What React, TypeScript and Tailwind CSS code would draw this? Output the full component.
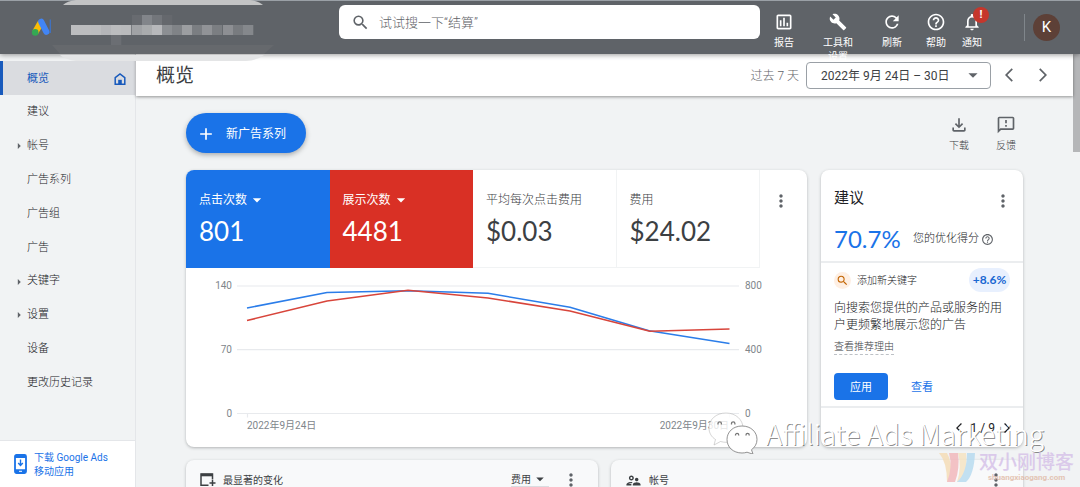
import React from "react";
import {
  MdAdd,
  MdArrowBackIosNew,
  MdArrowDropDown,
  MdArrowForwardIos,
  MdArrowRight,
  MdBuild,
  MdHelpOutline,
  MdMoreVert,
  MdNotificationsNone,
  MdOutlineAssessment,
  MdOutlineFeedback,
  MdOutlineFileDownload,
  MdOutlineSupervisorAccount,
  MdRefresh,
  MdSearch,
} from "react-icons/md";

const navItems = [
  { label: "概览", active: true },
  { label: "建议" },
  { label: "帐号", expandable: true },
  { label: "广告系列" },
  { label: "广告组" },
  { label: "广告" },
  { label: "关键字", expandable: true },
  { label: "设置", expandable: true },
  { label: "设备" },
  { label: "更改历史记录" },
];

const metrics = [
  { label: "点击次数", value: "801", menu: true, tone: "bg-[#1a73e8] text-white font-normal" },
  { label: "展示次数", value: "4481", menu: true, tone: "bg-[#d93025] text-white font-normal" },
  { label: "平均每次点击费用", value: "$0.03", tone: "border-r border-b border-[#f1f3f4] text-[#3c4043]" },
  { label: "费用", value: "$24.02", tone: "border-r border-b border-[#f1f3f4] text-[#3c4043]" },
];

const maskTiles = [
  [80, 15, "#686b70"], [90, 15, "#82858a"], [100, 15, "#73767b"], [110, 15, "#65686d"],
  [19, 25, "#bcbdbf"], [29, 25, "#bcbdbf"], [39, 25, "#bbbcbe"], [49, 25, "#b4b5b8"],
  [59, 25, "#bbbcbe"], [69, 25, "#b9babc"], [80, 25, "#a0a2a5"], [90, 25, "#a9abad"],
  [100, 25, "#b7b8bb"], [110, 25, "#8c8f93"], [120, 25, "#808387"], [130, 25, "#9c9ea1"],
  [140, 25, "#7b7e82"], [150, 25, "#919397"], [160, 25, "#7b7e82"], [171, 25, "#8d8f93"],
  [181, 25, "#787b7f"], [191, 25, "#85888c"], [59, 35, "#6b6e73"],
] as const;

function AdsLogo() {
  return (
    <svg viewBox="0 0 20 18" className="h-[18px] w-5 shrink-0" aria-hidden="true">
      <path d="M7.200 2.500 1.500 12.500 7 16 11 9Z" fill="#fbbc04" />
      <path d="M10.300 3.800 15.400 13.800" stroke="#4285f4" strokeWidth="6.200" strokeLinecap="round" />
      <path d="M19.300 1.500v13.500" stroke="#3f72c4" strokeWidth="1.300" />
      <circle cx="4.200" cy="14.400" r="3.300" fill="#34a853" />
    </svg>
  );
}

function AccountMask() {
  return (
    <svg viewBox="0 0 224 62" className="absolute top-0 left-full h-[62px] w-56" aria-hidden="true">
      <path d="M11 5Q15 1 24 0H198Q207 1 211 5Z" fill="#c3c4c5" />
      <path d="M0 45H222L212 54H8Z" fill="#66696d" />
      <path d="M8 55H212Q206 60 194 61H24Q12 59 8 55Z" fill="#e4e5e6" />
      {maskTiles.map(([x, y, fill]) => (
        <rect key={`${x}-${y}`} x={x} y={y} width="10.3" height="10" fill={fill} />
      ))}
    </svg>
  );
}

function HeaderAction({ icon, label, width }: { icon: React.ReactNode; label: string; width: string }) {
  return (
    <button className={`relative flex shrink-0 flex-col items-center pt-3 text-[10px] leading-[14px] ${width}`}>
      <span className="mb-1 text-xl">{icon}</span>
      <span className="max-w-[34px]">{label}</span>
    </button>
  );
}

function Header() {
  return (
    <header className="relative z-10 flex h-[54px] shrink-0 items-start border-t border-[#9aa0a6] bg-[#5f6368] font-normal text-white shadow-[0_1px_5px_rgba(0,0,0,0.4)]">
      <div className="relative -mt-px h-[54px] w-[52px] shrink-0 pt-[18px] pl-[31px]">
        <AdsLogo />
        <AccountMask />
      </div>
      <label className="mt-1 ml-[287px] flex h-[34px] flex-1 items-center gap-[9px] rounded-md bg-white px-3 text-[#5f6368]">
        <MdSearch className="size-[19px] shrink-0" />
        <input
          type="search"
          aria-label="搜索"
          placeholder="试试搜一下“结算”"
          className="min-w-0 flex-1 pt-0.5 text-[13px] font-light text-[#5f6368] outline-none placeholder:text-[#5f6368]"
        />
      </label>
      <nav className="-mt-px flex items-start pl-0.5" aria-label="工具">
        <HeaderAction icon={<MdOutlineAssessment />} label="报告" width="w-11" />
        <HeaderAction icon={<MdBuild className="p-px" />} label="工具和设置" width="w-16" />
        <HeaderAction icon={<MdRefresh />} label="刷新" width="w-11" />
        <HeaderAction icon={<MdHelpOutline />} label="帮助" width="w-11" />
        <div className="relative">
          <HeaderAction icon={<MdNotificationsNone />} label="通知" width="w-7" />
          <span className="absolute top-[7px] left-[15px] flex size-4 items-center justify-center rounded-full bg-[#c5372c] text-[11px] font-bold">
            !
          </span>
        </div>
      </nav>
      <div className="mt-[13px] mr-5 ml-[38px] flex items-center gap-2 border-l border-[#80868b]">
        <button className="ml-2 size-[27px] rounded-full bg-[#5d4037] text-[15px]">K</button>
      </div>
    </header>
  );
}

function Sidebar() {
  return (
    <aside className="flex w-[136px] shrink-0 flex-col justify-between border-r border-[#e4e6e9] bg-[#f1f3f4] pt-[7px]">
      <nav className="grid h-[338px] grid-rows-10 text-[11px] text-[#202124]">
        {navItems.map((item) => (
          <a
            key={item.label}
            href="#"
            className={
              item.active
                ? "flex items-center border-l-[3px] border-[#185abc] bg-[#dadce0] pt-0.5 pr-2 pl-6 font-normal text-[#185abc]"
                : "flex items-center pt-0.5 pl-3"
            }
          >
            {!item.active && (
              <span className="w-[15px] text-sm text-[#5f6368]">{item.expandable && <MdArrowRight />}</span>
            )}
            <span className="flex-1">{item.label}</span>
            {item.active && (
              <svg viewBox="0 0 14 14" className="size-3.5" fill="none" stroke="currentColor" strokeWidth="1.5">
                <path d="M2.2 12.2V5.6L7 1.9l4.8 3.7v6.6Z" />
                <path d="M5.2 12V7.8h3.6V12Z" fill="currentColor" stroke="none" />
              </svg>
            )}
          </a>
        ))}
      </nav>
      <a href="#" className="flex h-[47px] items-center gap-[7px] border-t border-[#e4e6e9] bg-white pl-3.5 text-[10px] leading-[14px] font-normal text-[#1a73e8]">
        <svg viewBox="0 0 13 20" className="h-5 w-[13px] shrink-0" fill="none" stroke="currentColor" aria-hidden="true">
          <rect x="1" y="1" width="11" height="18" rx="1.5" strokeWidth="1.8" />
          <path d="M1 2.6h11M1 16.8h11" strokeWidth="3" />
          <path d="M6.5 5.5v6M4.2 9l2.3 2.5L8.800 9" strokeWidth="1.4" />
          <path d="M5 17.300h3" stroke="#fff" />
        </svg>
        <span className="pt-0.5 whitespace-nowrap">
          下载 Google Ads
          <br />
          移动应用
        </span>
      </a>
    </aside>
  );
}

function TitleBar() {
  return (
    <div className="relative flex h-[42px] shrink-0 items-center bg-white pr-[22px] pl-5 text-xs text-[#3c4043] shadow-[0_1px_3px_rgba(0,0,0,0.4)]">
      <h1 className="flex-1 pt-0.5 text-[19px] font-normal text-[#3c4043]">概览</h1>
      <span className="mr-[7px] pt-0.5 text-[#5f6368]">过去 7 天</span>
      <button className="flex h-[27px] w-[185px] items-center justify-between rounded-sm border border-[#9aa0a6] pr-1.5 pl-3.5">
        <span className="pt-px font-normal">2022年 9月 24日 – 30日</span>
        <MdArrowDropDown className="size-[22px] text-[#5f6368]" />
      </button>
      <div className="ml-2.5 flex gap-[18px] text-sm text-[#5f6368]">
        <button aria-label="上一时段"><MdArrowBackIosNew className="size-4" /></button>
        <button aria-label="下一时段"><MdArrowForwardIos className="size-4" /></button>
      </div>
    </div>
  );
}

function Chart() {
  return (
    <svg viewBox="0 0 621 179" className="block w-full font-[Roboto,'Noto_Sans_CJK_SC',sans-serif] text-[10px] font-normal" role="img" aria-label="点击次数和展示次数">
      <g stroke="#e8eaed" strokeWidth="1.2">
        <path d="M51 18H553M51 81.700H553M51 145.500H553M61.500 145.500v4M543.500 145.500v4" />
      </g>
      <g fill="none" strokeWidth="1.6" strokeLinejoin="round">
        <path d="M61 40 141 24.500 222 22.700 302 25.300 384 39.300 463 62.700 543.500 75.500" stroke="#2b7de9" />
        <path d="M61 52.500 141 33 222 22.300 302 30 384 43 464 63.300 543.500 61" stroke="#d8453b" />
      </g>
      <g fill="#80868b">
        <g textAnchor="end">
          <text x="46" y="21">140</text>
          <text x="46" y="85">70</text>
          <text x="46" y="149">0</text>
          <text x="543" y="161">2022年9月30日</text>
        </g>
        <text x="559" y="21">800</text>
        <text x="559" y="85">400</text>
        <text x="559" y="149">0</text>
        <text x="61" y="161">2022年9月24日</text>
      </g>
    </svg>
  );
}

function MoreButton() {
  return (
    <button aria-label="更多" className="text-xl text-[#5f6368]">
      <MdMoreVert />
    </button>
  );
}

function MetricsCard() {
  return (
    <section className="flex-1 overflow-hidden rounded-lg bg-white shadow-[0_1px_3px_rgba(60,64,67,0.35)]">
      <div className="flex">
        <div className="grid flex-1 grid-cols-4">
          {metrics.map((m) => (
            <div key={m.label} className={`h-[98px] pt-[21px] pl-[13px] ${m.tone}`}>
              <div className="flex h-[18px] items-center text-xs">
                {m.label}
                {m.menu && <MdArrowDropDown className="size-5" />}
              </div>
              <div className="mt-[5px] font-[Lato,sans-serif] text-[26px] leading-[34px] font-normal">{m.value}</div>
            </div>
          ))}
        </div>
        <div className="flex w-[47px] justify-center pt-[21px] pr-1.5">
          <div><MoreButton /></div>
        </div>
      </div>
      <Chart />
    </section>
  );
}

function SuggestionCard() {
  return (
    <section className="flex w-[202px] shrink-0 flex-col rounded-lg bg-white text-[#202124] shadow-[0_1px_3px_rgba(60,64,67,0.35)]">
      <div className="flex h-[93px] flex-col border-b-2 border-[#ebedef] pt-4 pr-2.5 pl-[13px]">
        <div className="flex items-start justify-between">
          <h2 className="pt-px text-[15px] leading-[22px] font-normal">建议</h2>
          <div className="pt-[5px]"><MoreButton /></div>
        </div>
        <div className="mt-[5px] flex items-center text-[11px]">
          <span className="w-[79px] font-[Lato,sans-serif] text-2xl font-normal text-[#1a73e8]">70.7%</span>
          您的优化得分
          <MdHelpOutline className="ml-0.5 size-[13px] text-[#5f6368]" />
        </div>
      </div>
      <div className="flex h-[145px] flex-col items-start border-b-2 border-[#ebedef] px-[13px] pt-[5px]">
        <div className="flex w-full items-center text-[10px]">
          <span className="mr-1.5 flex size-[17px] items-center justify-center rounded-full bg-[#feefe3] text-[#c26401]">
            <MdSearch className="size-[13px]" />
          </span>
          <span className="flex-1">添加新关键字</span>
          <span className="flex h-6 w-[41px] items-center justify-center rounded-full bg-[#e8f0fe] font-[Lato,sans-serif] text-xs font-bold text-[#1967d2]">
            +8.6%
          </span>
        </div>
        <p className="mt-2 text-xs leading-[17px]">向搜索您提供的产品或服务的用户更频繁地展示您的广告</p>
        <a href="#" className="mt-[5px] border-b border-dashed border-[#bdc1c6] text-[10px] leading-[15px] text-[#3c4043]">
          查看推荐理由
        </a>
        <div className="mt-[18px] flex items-center gap-[23px] text-[11px]">
          <button className="h-[27px] w-[54px] rounded-sm bg-[#1a73e8] pt-1 font-normal text-white">应用</button>
          <button className="pt-1 font-normal text-[#1a73e8]">查看</button>
        </div>
      </div>
      <div className="flex flex-1 items-center justify-end gap-1.5 pr-2.5 text-xs font-normal">
        <button aria-label="上一条"><MdArrowBackIosNew className="size-3" /></button>
        1 / 9
        <button aria-label="下一条"><MdArrowForwardIos className="size-3" /></button>
      </div>
    </section>
  );
}

function WindowAddIcon() {
  return (
    <svg viewBox="0 0 16 14" className="h-3.5 w-4 shrink-0" fill="none" stroke="currentColor" strokeWidth="1.5" aria-hidden="true">
      <path d="M8.500 12.300H1V1h11.500v5.500" />
      <path d="M1 2h11.500" strokeWidth="2.600" />
      <path d="M12.500 7v6M9.500 10h6" />
    </svg>
  );
}

function BottomCard({ icon, label, children }: { icon: React.ReactNode; label: string; children?: React.ReactNode }) {
  return (
    <section className="flex h-24 flex-1 items-start rounded-lg bg-[#f8f9fa] pt-2.5 pr-[17px] pl-3.5 font-normal text-[#3c4043] shadow-[0_1px_3px_rgba(60,64,67,0.35)]">
      <div className="flex h-5 flex-1 items-center gap-[7px] text-[10px]">
        {icon}
        <h2>{label}</h2>
      </div>
      {children}
      <MoreButton />
    </section>
  );
}

function Toolbar() {
  return (
    <div className="flex items-start justify-between">
      <button className="flex h-10 items-center gap-2.5 rounded-full bg-[#1a73e8] pt-px pr-5 pl-2.5 text-xs font-normal text-white shadow-[0_2px_5px_rgba(60,64,67,0.4)]">
        <MdAdd className="size-5" />
        新广告系列
      </button>
      <div className="flex gap-[15px] pt-0.5 pr-px text-[10px] leading-[14px] text-[#3c4043]">
        <button className="flex w-8 flex-col items-center gap-1">
          <MdOutlineFileDownload className="size-5 text-[#5f6368]" />
          下载
        </button>
        <button className="flex w-8 flex-col items-center gap-1">
          <MdOutlineFeedback className="size-5 text-[#5f6368]" />
          反馈
        </button>
      </div>
    </div>
  );
}

function ChannelMark() {
  return (
    <div className="pointer-events-none absolute right-9 bottom-[33px] z-20 flex items-center gap-2 font-light text-white">
      <svg viewBox="0 0 50 42" className="h-[42px] w-[50px]" aria-hidden="true">
        <g fill="#fff" stroke="#999" strokeWidth="0.8">
          <path fillOpacity="0.8" strokeOpacity="0.5" d="M18 1C8 1 1 7.500 1 16c0 5 2.500 9 6.500 11.500L6 33l6.500-3.500c2 .6 4 .8 6 .8C28 30.300 35 24 35 16S28 1 18 1Z" />
          <path stroke="#777" d="M34 14c-9 0-15 6-15 13.500S25 41 34 41c2 0 3.500-.3 5-.8l6 2-1.500-4.500c3.500-2.500 5.500-6 5.500-10.200C49 20 43 14 34 14Z" />
        </g>
        <g fill="none" stroke="#777" strokeWidth="1.3">
          <path d="M10 12.500v-1a1.700 1.700 0 0 1 3.400 0v1M23.500 12.500v-1a1.700 1.700 0 0 1 3.400 0v1M27.500 23.500v-.5a1.600 1.600 0 0 1 3.200 0v.5M38 23.500v-.5a1.600 1.600 0 0 1 3.200 0v.5" />
        </g>
      </svg>
      <span className="font-['Noto_Sans_CJK_SC',sans-serif] text-[28px] leading-8 whitespace-nowrap [text-shadow:1px_1px_0px_rgba(0,0,0,0.45)]">
        Affiliate Ads Marketing
      </span>
    </div>
  );
}

function BlogMark() {
  return (
    <div className="pointer-events-none absolute right-1.5 bottom-1 z-20 flex items-center gap-1 opacity-80">
      <svg viewBox="0 0 36 30" className="h-[30px] w-9" aria-hidden="true">
        <path d="M0 0h8q5 8 5 29H8Q8 9 0 0Z" fill="#f5dcb4" />
        <path d="M10 0h9q2 16-3 29H8Q14 14 10 0Z" fill="#f2b5b9" />
        <path d="M19 0h8q2 14-3 29h-6Q23 14 19 0Z" fill="#f6e3c0" />
        <path d="M28 0h8q-1 22-9 29h-9Q28 20 28 0Z" fill="#b5daf0" />
      </svg>
      <div className="flex flex-col items-center">
        <span className="text-[19px] leading-5 font-medium text-[#d5bfe8]">双小刚博客</span>
        <span className="text-[8px] leading-[10px] font-bold text-[#e0b8a4]">shuangxiaogang.com</span>
      </div>
    </div>
  );
}

export default function App() {
  return (
    <div className="relative flex h-screen flex-col overflow-hidden bg-[#f1f3f4] font-[Roboto,'Noto_Sans_CJK_SC',sans-serif] font-light">
      <Header />
      <div className="flex min-h-0 flex-1">
        <Sidebar />
        <div className="flex min-w-0 flex-1 flex-col">
          <TitleBar />
          <main className="flex min-h-0 flex-1 flex-col overflow-hidden px-[50px] pt-[17px]">
            <Toolbar />
            <div className="mt-[17px] flex gap-3.5">
              <MetricsCard />
              <SuggestionCard />
            </div>
            <div className="mt-[13px] flex gap-[13px]">
              <BottomCard icon={<WindowAddIcon />} label="最显著的变化">
                <button className="mr-3 flex h-[17px] items-center border-b border-[#dadce0] pt-0.5 text-[10px]">
                  费用
                  <MdArrowDropDown className="size-[18px]" />
                </button>
              </BottomCard>
              <BottomCard icon={<MdOutlineSupervisorAccount className="size-[17px]" />} label="帐号" />
            </div>
          </main>
        </div>
        <div className="w-[7px] shrink-0 bg-[#f1f3f4]">
          <div className="h-[98px] bg-[#b5b6b8]" />
        </div>
      </div>
      <ChannelMark />
      <BlogMark />
    </div>
  );
}
